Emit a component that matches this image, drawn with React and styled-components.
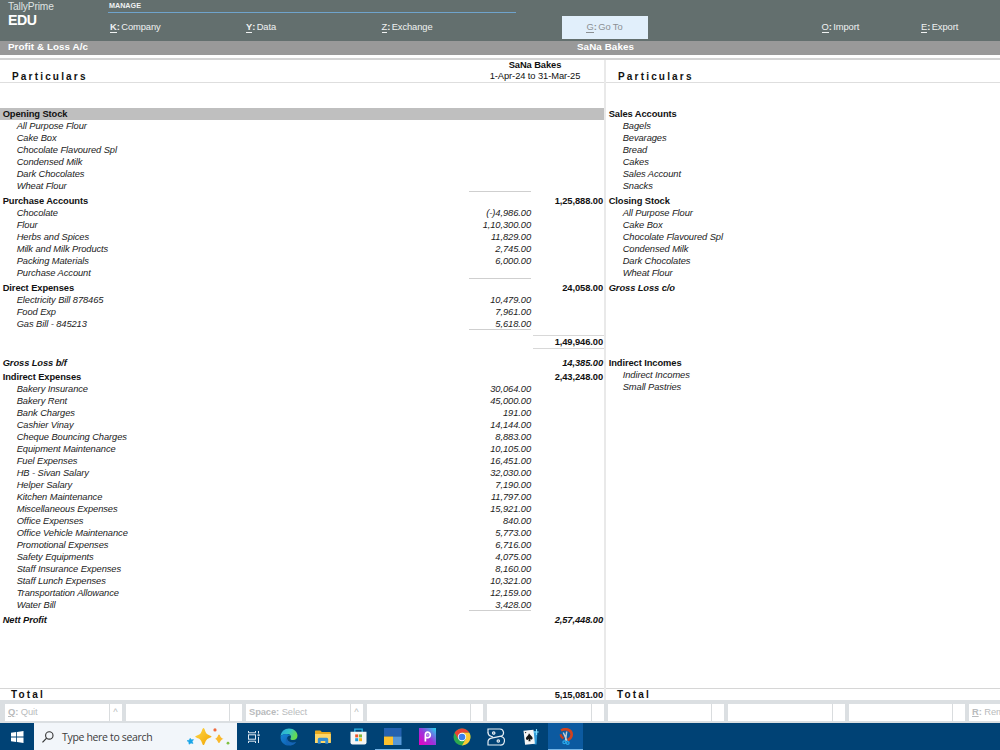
import React from "react";
import styled, { createGlobalStyle, css } from "styled-components";

const expenses = [
  {
    name: "Opening Stock",
    selected: true,
    ruled: true,
    items: [
      ["All Purpose Flour"],
      ["Cake Box"],
      ["Chocolate Flavoured Spl"],
      ["Condensed Milk"],
      ["Dark Chocolates"],
      ["Wheat Flour"],
    ],
  },
  {
    name: "Purchase Accounts",
    total: "1,25,888.00",
    gap: 3,
    ruled: true,
    items: [
      ["Chocolate", "(-)4,986.00"],
      ["Flour", "1,10,300.00"],
      ["Herbs and Spices", "11,829.00"],
      ["Milk and Milk Products", "2,745.00"],
      ["Packing Materials", "6,000.00"],
      ["Purchase Account"],
    ],
  },
  {
    name: "Direct Expenses",
    total: "24,058.00",
    gap: 3,
    ruled: true,
    items: [
      ["Electricity Bill 878465", "10,479.00"],
      ["Food Exp", "7,961.00"],
      ["Gas Bill - 845213", "5,618.00"],
    ],
  },
  { subtotal: "1,49,946.00" },
  { name: "Gross Loss b/f", total: "14,385.00", italic: true, gap: 8 },
  {
    name: "Indirect Expenses",
    total: "2,43,248.00",
    gap: 2,
    ruled: true,
    items: [
      ["Bakery Insurance", "30,064.00"],
      ["Bakery Rent", "45,000.00"],
      ["Bank Charges", "191.00"],
      ["Cashier Vinay", "14,144.00"],
      ["Cheque Bouncing Charges", "8,883.00"],
      ["Equipment Maintenance", "10,105.00"],
      ["Fuel Expenses", "16,451.00"],
      ["HB - Sivan Salary", "32,030.00"],
      ["Helper Salary", "7,190.00"],
      ["Kitchen Maintenance", "11,797.00"],
      ["Miscellaneous Expenses", "15,921.00"],
      ["Office Expenses", "840.00"],
      ["Office Vehicle Maintenance", "5,773.00"],
      ["Promotional Expenses", "6,716.00"],
      ["Safety Equipments", "4,075.00"],
      ["Staff Insurance Expenses", "8,160.00"],
      ["Staff Lunch Expenses", "10,321.00"],
      ["Transportation Allowance", "12,159.00"],
      ["Water Bill", "3,428.00"],
    ],
  },
  { name: "Nett Profit", total: "2,57,448.00", italic: true, gap: 3 },
];

const incomes = [
  {
    name: "Sales Accounts",
    items: [
      ["Bagels"],
      ["Bevarages"],
      ["Bread"],
      ["Cakes"],
      ["Sales Account"],
      ["Snacks"],
    ],
  },
  {
    name: "Closing Stock",
    gap: 3,
    items: [
      ["All Purpose Flour"],
      ["Cake Box"],
      ["Chocolate Flavoured Spl"],
      ["Condensed Milk"],
      ["Dark Chocolates"],
      ["Wheat Flour"],
    ],
  },
  { name: "Gross Loss c/o", italic: true, gap: 3 },
  {
    name: "Indirect Incomes",
    gap: 63,
    items: [["Indirect Incomes"], ["Small Pastries"]],
  },
];

const footerKeys = [
  { hotkey: "Q", label: "Quit", underline: true, caret: true },
  {},
  { hotkey: "Space", label: "Select", caret: true },
  {},
  {},
  {},
  {},
  {},
  { hotkey: "R", label: "Rem", underline: true },
];

function Ledger({ groups }) {
  return groups.map((group, index) =>
    group.subtotal ? (
      <Subtotal key={index}>{group.subtotal}</Subtotal>
    ) : (
      <Group key={index} $gap={group.gap}>
        <GroupRow $selected={group.selected} $italic={group.italic}>
          <span>{group.name}</span>
          <Total>{group.total}</Total>
        </GroupRow>
        {(group.items || []).map(([name, amount], i) => (
          <ItemRow key={name}>
            <span>{name}</span>
            <Amount $ruled={group.ruled && i === group.items.length - 1}>
              {amount}
            </Amount>
          </ItemRow>
        ))}
      </Group>
    )
  );
}

function MenuItem({ hotkey, label, bold }) {
  return (
    <MenuLabel>
      <Hotkey $bold={bold}>{hotkey}</Hotkey>
      <b>:</b> {label}
    </MenuLabel>
  );
}

export default function App() {
  return (
    <Screen>
      <GlobalStyle />
      <TopBar>
        <Brand>
          TallyPrime
          <strong>EDU</strong>
        </Brand>
        <Menus>
          <Manage>MANAGE</Manage>
          <MenuRow>
            <MenuItem hotkey="K" label="Company" bold />
            <MenuItem hotkey="Y" label="Data" bold />
            <MenuItem hotkey="Z" label="Exchange" />
            <GoTo>
              <MenuItem hotkey="G" label="Go To" />
            </GoTo>
            <MenuItem hotkey="O" label="Import" />
            <MenuItem hotkey="E" label="Export" />
          </MenuRow>
        </Menus>
      </TopBar>
      <TitleBar>
        <span>Profit &amp; Loss A/c</span>
        <span>SaNa Bakes</span>
      </TitleBar>
      <Report>
        <Side $left>
          <SideHead>
            <Wide>Particulars</Wide>
            <Period>
              <b>SaNa Bakes</b>
              <span>1-Apr-24 to 31-Mar-25</span>
            </Period>
          </SideHead>
          <SideBody>
            <Ledger groups={expenses} />
          </SideBody>
          <SideFoot>
            <Wide>Total</Wide>
            <Total>5,15,081.00</Total>
          </SideFoot>
        </Side>
        <Side>
          <SideHead>
            <Wide>Particulars</Wide>
          </SideHead>
          <SideBody>
            <Ledger groups={incomes} />
          </SideBody>
          <SideFoot>
            <Wide>Total</Wide>
          </SideFoot>
        </Side>
      </Report>
      <KeyBar>
        {footerKeys.map((key, index) => (
          <Key key={index}>
            <KeyLabel>
              {key.hotkey && (
                <>
                  <KeyName $underline={key.underline}>{key.hotkey}</KeyName>
                  <b>:</b> {key.label}
                </>
              )}
            </KeyLabel>
            <KeyMore>{key.caret && "^"}</KeyMore>
          </Key>
        ))}
      </KeyBar>
      <TaskBar>
        <Start>
          <WindowsIcon />
        </Start>
        <Search>
          <SearchIcon />
          <span>Type here to search</span>
          <SparkleIcon />
        </Search>
        <Task>
          <TaskViewIcon />
        </Task>
        <Task>
          <EdgeIcon />
        </Task>
        <Task>
          <FolderIcon />
        </Task>
        <Task>
          <StoreIcon />
        </Task>
        <Task $open>
          <TilesIcon />
        </Task>
        <Task>
          <PicsartIcon />
        </Task>
        <Task>
          <ChromeIcon />
        </Task>
        <Task>
          <BIcon />
        </Task>
        <Task>
          <CardsIcon />
        </Task>
        <Task $active>
          <SnipIcon />
        </Task>
      </TaskBar>
    </Screen>
  );
}

function WindowsIcon() {
  return (
    <svg width="13" height="12" viewBox="0 0 13 12" fill="#fff">
      <path d="M0 1.7 5.2 1v4.6H0zM6 .9 12.5 0v5.6H6zM0 6.4h5.2V11L0 10.300zM6 6.400h6.500V12L6 11.100z" />
    </svg>
  );
}

function SearchIcon() {
  return (
    <svg width="12" height="12" viewBox="0 0 12 12" fill="none" stroke="#333">
      <circle cx="7.300" cy="4.400" r="3.700" strokeWidth="1.100" />
      <path d="M4.600 7.100.5 11.300" strokeWidth="1.200" />
    </svg>
  );
}

function SparkleIcon() {
  return (
    <svg width="44" height="18" viewBox="0 0 44 18">
      <defs>
        <linearGradient id="star" x1="0" y1="0" x2="1" y2="1">
          <stop offset="0" stopColor="#ffd84a" />
          <stop offset="1" stopColor="#f0a400" />
        </linearGradient>
      </defs>
      <path
        d="M17.500 0C18.800 0 19 4 20.700 5.700S25.500 7.400 25.500 8.600 22.400 10 20.700 11.700 18.800 17 17.500 17 16 13.300 14.300 11.700 9.300 9.800 9.300 8.600 12.600 7.400 14.300 5.700 16.200 0 17.500 0Z"
        fill="url(#star)"
      />
      <path d="M33 6.500c1.300 0 1 3.700 4.500 4.300-3.200.7-3.200 4.200-4.500 4.200s-1.300-3.500-4-4.200c3-.6 2.700-4.300 4-4.300Z" fill="#f9b92c" />
      <path d="m4.200 10.300 1.100 1.500 2.200-.2-1.300 1.800.8 2.100-2-.5-2 1.200-.1-2.200L1 12.700l2.200-.5Z" fill="#19a5e8" stroke="#19a5e8" strokeWidth=".6" />
      <circle cx="29" cy="1.900" r="1.600" fill="#f0693c" />
      <circle cx="42" cy="15.200" r="1.400" fill="#7fc142" />
    </svg>
  );
}

function TaskViewIcon() {
  return (
    <svg width="14" height="12" viewBox="0 0 14 12" fill="none" stroke="#dfe9f2">
      <path d="M1.500 0v1.800h7V0M1.500 12v-1.800h7V12" />
      <rect x="1.500" y="3.800" width="7" height="4.400" />
      <path d="M11.500 0v2.500M11.500 5.800V12" />
      <path d="M10.500 4.100h2.200" strokeWidth="1.500" />
    </svg>
  );
}

function EdgeIcon() {
  return (
    <svg width="18" height="18" viewBox="0 0 18 18">
      <defs>
        <linearGradient id="edgeTop" x1="0" y1="0" x2="1" y2=".4">
          <stop offset="0" stopColor="#26a7df" />
          <stop offset=".55" stopColor="#35c4c5" />
          <stop offset="1" stopColor="#67db4c" />
        </linearGradient>
        <linearGradient id="edgeLow" x1="0" y1="0" x2="1" y2="1">
          <stop offset="0" stopColor="#1787d9" />
          <stop offset="1" stopColor="#0b55a5" />
        </linearGradient>
      </defs>
      <path d="M.6 8.200C1 3.600 4.600.5 9 .5c5 0 8.500 3.400 8.500 7.300 0 2.800-2 4.300-4.500 4.300-2 0-3.100-.8-2.400-1.800 1.100-1.700-.1-4.300-2.900-4.300C4.500 6 1.600 6.800.6 8.200Z" fill="url(#edgeTop)" />
      <path d="M.6 8.500C1.800 6.800 4 5.800 6.800 5.900c1.800 0 3.200.8 3.800 2C8.500 7 6.900 9 7 11c.2 2.800 3.200 4.500 8.800 3.300C14.300 16.400 12 17.600 9 17.600 4 17.600.2 13.800.6 8.500Z" fill="url(#edgeLow)" />
      <path d="M7 9.800c-2.500 2.500-.5 6.800 3.400 7.700 2.500-.2 4.800-1.700 5.800-3.500C12 15.700 7.300 13.900 7 9.800Z" fill="#1565b5" />
    </svg>
  );
}

function FolderIcon() {
  return (
    <svg width="16" height="14" viewBox="0 0 16 14">
      <path d="M0 1.200Q0 .5.700.5h4.600l1.500 1.600H15q.8 0 .8.800V12.500H0Z" fill="#e8a91d" />
      <path d="M0 4h15.800v9H0Z" fill="#ffd767" />
      <path d="M2.800 13.800V9.300q0-1.500 1.500-1.500h7.400q1.500 0 1.500 1.500v4.500h-2.900v-2.700H5.700v2.700Z" fill="#368fd3" />
    </svg>
  );
}

function StoreIcon() {
  return (
    <svg width="17" height="17" viewBox="0 0 17 17">
      <path d="M4.800 5V1.200h7.400V5" fill="none" stroke="#28b5e8" strokeWidth="1.300" />
      <path d="M.5 3.800h16v10.700q0 2-2 2h-12q-2 0-2-2Z" fill="#f4f5f6" />
      <path d="M5.200 6.400h3v3h-3z" fill="#ef5428" />
      <path d="M9 6.400h3v3H9z" fill="#7db93b" />
      <path d="M5.200 10.200h3v3h-3z" fill="#1c9fdf" />
      <path d="M9 10.200h3v3H9z" fill="#f9b51c" />
    </svg>
  );
}

function TilesIcon() {
  return (
    <svg width="18" height="17" viewBox="0 0 18 17">
      <path d="M0 0h17.500v8.500H0z" fill="#2461b0" />
      <path d="M0 8.500h9V17H0z" fill="#fdc12e" />
      <path d="M9 8.500h8.500V17H9z" fill="#5798d8" />
    </svg>
  );
}

function PicsartIcon() {
  return (
    <svg width="17" height="17" viewBox="0 0 17 17">
      <defs>
        <linearGradient id="pics" x1="0" y1="1" x2="1" y2="0">
          <stop offset="0" stopColor="#e900c1" />
          <stop offset=".5" stopColor="#9a35dc" />
          <stop offset="1" stopColor="#20d8ee" />
        </linearGradient>
      </defs>
      <path d="M0 0h17v17H0z" fill="url(#pics)" />
      <path d="M6.400 13.500V6.800Q6.400 4.200 8.700 4.200a2.700 2.700 0 1 1-1.500 5" fill="none" stroke="#fff" strokeWidth="1.700" />
      <circle cx="8.900" cy="6.900" r=".7" fill="#fff" />
    </svg>
  );
}

function ChromeIcon() {
  return (
    <svg width="18" height="18" viewBox="0 0 18 18">
      <circle cx="9" cy="9" r="8.500" fill="#2da94f" />
      <path d="M9 9 1.640 4.750A8.500 8.500 0 0 1 16.360 4.750H9Z" fill="#e94335" />
      <path d="M9 4.750h7.360A8.500 8.500 0 0 1 9 17.500l3.700-6.400Z" fill="#fcc934" />
      <path d="M1.640 4.750 5.300 11.100 9 9 9 4.750Z" fill="#e94335" />
      <circle cx="9" cy="9" r="4.200" fill="#fff" />
      <circle cx="9" cy="9" r="3.300" fill="#3c7fed" />
    </svg>
  );
}

function BIcon() {
  return (
    <svg width="18" height="18" viewBox="0 0 18 18" fill="none" stroke="#e4edf4" strokeWidth="1.200">
      <path d="M1 5V1h12a3.700 3.700 0 0 1 1 7.200L4.500 10.200Q1 11 1 14v3h11.800a4.300 4.300 0 0 0 1.200-8.500" />
      <path d="M1 4.500q0 2.800 3 3.800l2 .8" />
      <circle cx="6.700" cy="5" r="1.200" />
      <circle cx="11.300" cy="13" r="1.200" />
    </svg>
  );
}

function CardsIcon() {
  return (
    <svg width="18" height="18" viewBox="0 0 18 18">
      <path d="m6.500 2.500 9 1-1 13-8-1Z" fill="#329bd8" />
      <path d="m1.500 2.800 10-1 1.400 14-9.800 1Z" fill="#f5f5f5" />
      <path d="M7 5.200c1 2 3.400 3 3.600 4.800.1 1.600-1.800 2-2.700 1l.8 2.300H6.400l.5-2.200c-1 1.300-3 .9-3-.6C3.900 8.700 6.400 7.700 7 5.200Z" fill="#151515" />
      <circle cx="3.600" cy="4.600" r=".7" fill="#222" />
      <path d="M14.500 1v6M11.700 4h5" stroke="#7fdcff" strokeWidth="1.100" />
    </svg>
  );
}

function SnipIcon() {
  return (
    <svg width="18" height="18" viewBox="0 0 18 18" fill="none">
      <path d="M4 2.500C9-.5 14.800 2 14.700 6.500c0 2.400-1.200 4-3.900 5.500" stroke="#d0421f" strokeWidth="2.600" />
      <path d="M3.800 6.300c0 1.800.9 3.200 2.700 4" stroke="#c73d1d" strokeWidth="2.200" />
      <path d="M6.300 4.500 10 12.700M9.700 3.500 8.500 12.700" stroke="#c4ccd3" strokeWidth="1.500" />
      <circle cx="7.300" cy="14.300" r="1.400" stroke="#28a5e8" strokeWidth="1.300" />
      <circle cx="10.700" cy="15" r="1.400" stroke="#28a5e8" strokeWidth="1.300" />
    </svg>
  );
}

const GlobalStyle = createGlobalStyle`
  * {
    box-sizing: border-box;
  }
  body {
    margin: 0;
    overflow: hidden;
    font-family: "Liberation Sans", Arial, sans-serif;
  }
`;

const Screen = styled.div`
  display: flex;
  flex-direction: column;
  width: 1000px;
  height: 750px;
  overflow: hidden;
  background: #fff;
  color: #111;
  font-size: 9.350px;
  letter-spacing: -0.090px;
  white-space: nowrap;
`;

const TopBar = styled.header`
  display: flex;
  flex: none;
  height: 41px;
  background: #636f6e;
  color: #f0f2f2;
`;

const Brand = styled.div`
  width: 108px;
  padding: 1px 0 0 8px;
  font-size: 10.200px;
  letter-spacing: -0.130px;
  line-height: 11px;
  color: #dfe3e3;
  strong {
    display: block;
    color: #fff;
    font-size: 14.200px;
    letter-spacing: -0.500px;
    line-height: 17px;
  }
`;

const Menus = styled.div`
  flex: 1;
`;

const Manage = styled.div`
  width: 408px;
  height: 13px;
  padding: 1px 0 0 1px;
  border-bottom: 1px solid #6fa3cc;
  font-size: 7.200px;
  font-weight: bold;
  letter-spacing: 0;
  line-height: 10px;
`;

const MenuRow = styled.nav`
  display: grid;
  grid-template-columns: 136px 135.500px 180px 260px 99.500px 1fr;
  align-items: center;
  height: 28px;
  padding-left: 2px;
`;

const MenuLabel = styled.span`
  line-height: 12px;
  b {
    margin-right: -1px;
  }
`;

const Hotkey = styled.span`
  display: inline-block;
  height: 12px;
  border-bottom: 1px solid currentColor;
  font-weight: ${(props) => (props.$bold ? "bold" : "normal")};
`;

const GoTo = styled.div`
  display: flex;
  align-items: center;
  justify-content: center;
  width: 86px;
  height: 23px;
  background: #e1effb;
  color: #8b9093;
`;

const TitleBar = styled.div`
  display: grid;
  grid-template-columns: 569px 1fr;
  flex: none;
  height: 14px;
  padding-left: 8px;
  background: #999;
  color: #fff;
  font-size: 9.800px;
  font-weight: bold;
  letter-spacing: 0.090px;
  line-height: 12px;
`;

const Report = styled.main`
  display: flex;
  flex: 1;
  min-height: 0;
  margin-top: 3px;
  border-top: 2px solid #d4d4d4;
`;

const Side = styled.section`
  display: flex;
  flex-direction: column;
  ${(props) =>
    props.$left
      ? css`
          width: 606px;
          border-right: 2px solid #e9e9e9;
        `
      : css`
          flex: 1;
        `}
`;

const SideHead = styled.div`
  display: flex;
  justify-content: space-between;
  align-items: flex-end;
  height: 23px;
  padding-left: 12px;
  border-bottom: 1px solid #dedede;
`;

const Wide = styled.span`
  font-weight: bold;
  font-size: 10px;
  letter-spacing: 2.180px;
  line-height: 11px;
`;

const Period = styled.div`
  display: flex;
  flex-direction: column;
  align-items: center;
  width: 138px;
  line-height: 11px;
`;

const SideBody = styled.div`
  flex: 1;
  padding-top: 25px;
`;

const Group = styled.div`
  margin-top: ${(props) => props.$gap || 0}px;
`;

const Row = styled.div`
  display: flex;
  justify-content: space-between;
  height: 12px;
  line-height: 12px;
`;

const GroupRow = styled(Row)`
  padding-left: 2.700px;
  background: ${(props) => (props.$selected ? "#bfbfbf" : "none")};
  font-weight: bold;
  font-style: ${(props) => (props.$italic ? "italic" : "normal")};
`;

const ItemRow = styled(Row)`
  padding-left: 16.700px;
  padding-right: 73px;
  color: #222;
  font-style: italic;
`;

const Amount = styled.span`
  width: 62px;
  border-bottom: ${(props) => (props.$ruled ? "1px solid #cfcfcf" : "none")};
  text-align: right;
`;

const Total = styled.span`
  padding-right: 1px;
  font-weight: bold;
  text-align: right;
`;

const Subtotal = styled.div`
  width: 71px;
  height: 14px;
  margin: 5px 0 0 auto;
  padding-right: 1px;
  border-top: 1px solid #d8d8d8;
  border-bottom: 1px solid #d8d8d8;
  font-weight: bold;
  line-height: 12px;
  text-align: right;
`;

const SideFoot = styled.div`
  display: flex;
  align-items: center;
  justify-content: space-between;
  height: 12px;
  padding-left: 11px;
  border-top: 1px solid #d6d6d6;
`;

const KeyBar = styled.footer`
  display: flex;
  gap: 4px;
  flex: none;
  height: 23px;
  padding: 4px 0 2px 5px;
  background: #dbdfe2;
`;

const Key = styled.div`
  display: flex;
  flex: none;
  width: 116.500px;
  background: #fff;
  color: #b9bbbd;
  line-height: 17px;
`;

const KeyLabel = styled.div`
  flex: 1;
  padding-left: 3px;
`;

const KeyName = styled.b`
  text-decoration: ${(props) => (props.$underline ? "underline" : "none")};
`;

const KeyMore = styled.div`
  width: 13px;
  border-left: 1px solid #d9dcde;
  text-align: center;
`;

const TaskBar = styled.div`
  display: flex;
  flex: none;
  height: 27px;
  background: #004275;
`;

const Start = styled.div`
  display: flex;
  align-items: center;
  justify-content: center;
  width: 34px;
`;

const Search = styled.div`
  display: flex;
  align-items: center;
  width: 203px;
  padding: 0 7px 0 8px;
  background: #f2f6fa;
  color: #3c3c3c;
  font-family: "Open Sans", "Noto Sans", sans-serif;
  font-size: 10.500px;
  letter-spacing: -0.330px;
  span {
    flex: 1;
    padding-left: 8px;
  }
`;

const Task = styled.div`
  display: flex;
  align-items: center;
  justify-content: center;
  width: 34.600px;
  background: ${(props) => (props.$active ? "#0c5aa0" : "none")};
  box-shadow: ${(props) =>
    props.$active || props.$open ? "inset 0 -1px #75b5e6" : "none"};
`;
